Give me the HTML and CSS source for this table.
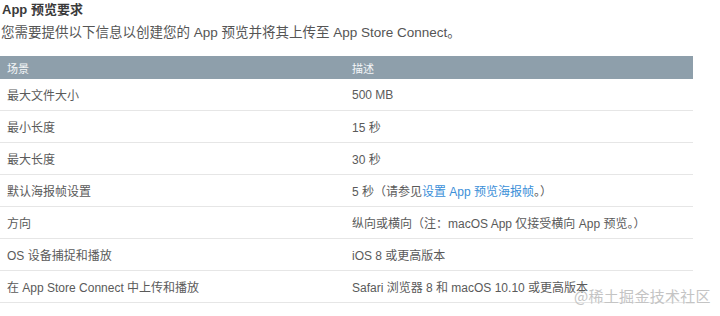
FILE: index.html
```html
<!DOCTYPE html>
<html lang="zh">
<head>
<meta charset="utf-8">
<link rel="stylesheet" href="styles.css">
</head>
<body>
<div class="page">
  <h1 class="title">App 预览要求</h1>
  <p class="intro">您需要提供以下信息以创建您的 App 预览并将其上传至 App Store Connect。</p>
  <table class="req">
    <thead>
      <tr><th class="c1">场景</th><th class="c2">描述</th></tr>
    </thead>
    <tbody>
      <tr><td>最大文件大小</td><td>500 MB</td></tr>
      <tr><td>最小长度</td><td>15 秒</td></tr>
      <tr><td>最大长度</td><td>30 秒</td></tr>
      <tr><td>默认海报帧设置</td><td>5 秒（请参见<a class="link" href="#">设置 App 预览海报帧</a>。）</td></tr>
      <tr><td>方向</td><td>纵向或横向（注：macOS App 仅接受横向 App 预览。）</td></tr>
      <tr><td>OS 设备捕捉和播放</td><td>iOS 8 或更高版本</td></tr>
      <tr><td>在 App Store Connect 中上传和播放</td><td>Safari 浏览器 8 和 macOS 10.10 或更高版本</td></tr>
    </tbody>
  </table>
  <div class="mark">@稀土掘金技术社区</div>
</div>
</body>
</html>
```
FILE: styles.css
```css
html, body {
  margin: 0;
  padding: 0;
  background: #ffffff;
}
body {
  font-family: "Liberation Sans", "Noto Sans CJK SC", sans-serif;
  color: #555555;
  width: 720px;
  height: 316px;
  overflow: hidden;
}
.page {
  position: relative;
  padding-top: 1px;
}
.title {
  margin: 0 0 0 2px;
  font-size: 13px;
  line-height: 18px;
  font-weight: bold;
  color: #3a3a3a;
}
.intro {
  margin: 5px 0 0 1px;
  font-size: 13.5px;
  line-height: 18px;
  color: #555555;
}
.req {
  margin-top: 14px;
  width: 693px;
  border-collapse: collapse;
  font-size: 12px;
}
.req th {
  background: #8e9fab;
  color: #f4f6f8;
  font-weight: normal;
  font-size: 11px;
  text-align: left;
  height: 23px;
  padding: 0 0 0 7px;
}
.req .c1 { width: 338px; }
.req td {
  height: 31px;
  padding: 0 0 0 7px;
  border-bottom: 1px solid #e6e6e6;
  color: #5a5a5a;
}
.link {
  color: #3b8fd8;
  text-decoration: none;
}
.mark {
  position: absolute;
  left: 574px;
  top: 285px;
  font-size: 15px;
  color: #c4c4c4;
  font-family: "Noto Sans CJK SC", sans-serif;
  letter-spacing: 0.3px;
}
```
